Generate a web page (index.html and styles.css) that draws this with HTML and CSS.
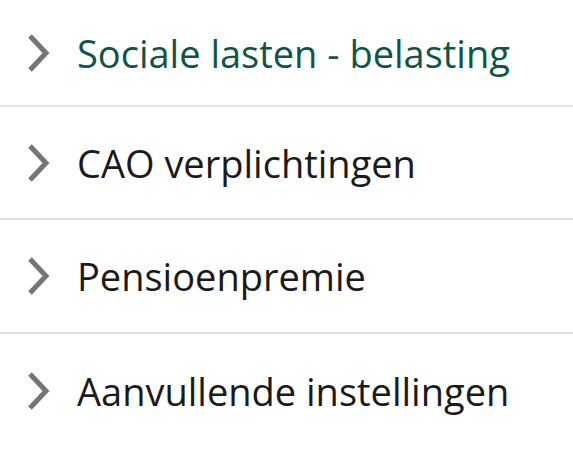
FILE: index.html
```html
<!DOCTYPE html>
<html lang="nl">
<head>
  <meta charset="UTF-8" />
  <title>Instellingen</title>
  <link rel="stylesheet" href="styles.css">
</head>
<body>
  <div class="accordion">
    <div class="acc-item active">
      <svg class="chevron" viewBox="0 0 24 40"><path d="M3 3 L19 20 L3 37" /></svg>
      <span class="acc-title">Sociale lasten - belasting</span>
    </div>
    <div class="acc-item">
      <svg class="chevron" viewBox="0 0 24 40"><path d="M3 3 L19 20 L3 37" /></svg>
      <span class="acc-title">CAO verplichtingen</span>
    </div>
    <div class="acc-item">
      <svg class="chevron" viewBox="0 0 24 40"><path d="M3 3 L19 20 L3 37" /></svg>
      <span class="acc-title">Pensioenpremie</span>
    </div>
    <div class="acc-item">
      <svg class="chevron" viewBox="0 0 24 40"><path d="M3 3 L19 20 L3 37" /></svg>
      <span class="acc-title">Aanvullende instellingen</span>
    </div>
  </div>
</body>
</html>
```

FILE: styles.css
```css
body {
  margin: 0;
  background: #fff;
  font-family: 'Open Sans', 'Noto Sans', sans-serif;
}

.accordion {
  width: 573px;
}

.acc-item {
  display: flex;
  align-items: center;
  height: 113px;
  padding-left: 27px;
  border-bottom: 2px solid #e1e1e1;
  box-sizing: border-box;
  color: #1a1a1a;
}

.acc-item:first-child {
  height: 107px;
}

.acc-item:nth-child(3) {
  height: 114px;
}

.acc-item:last-child {
  border-bottom: none;
}

.acc-item.active {
  color: #0e5643;
}

.chevron {
  width: 24px;
  height: 40px;
  flex: none;
  margin-right: 26px;
}

.chevron path {
  fill: none;
  stroke: #757575;
  stroke-width: 5;
}

.acc-title {
  font-size: 38px;
  line-height: 1;
}
```
